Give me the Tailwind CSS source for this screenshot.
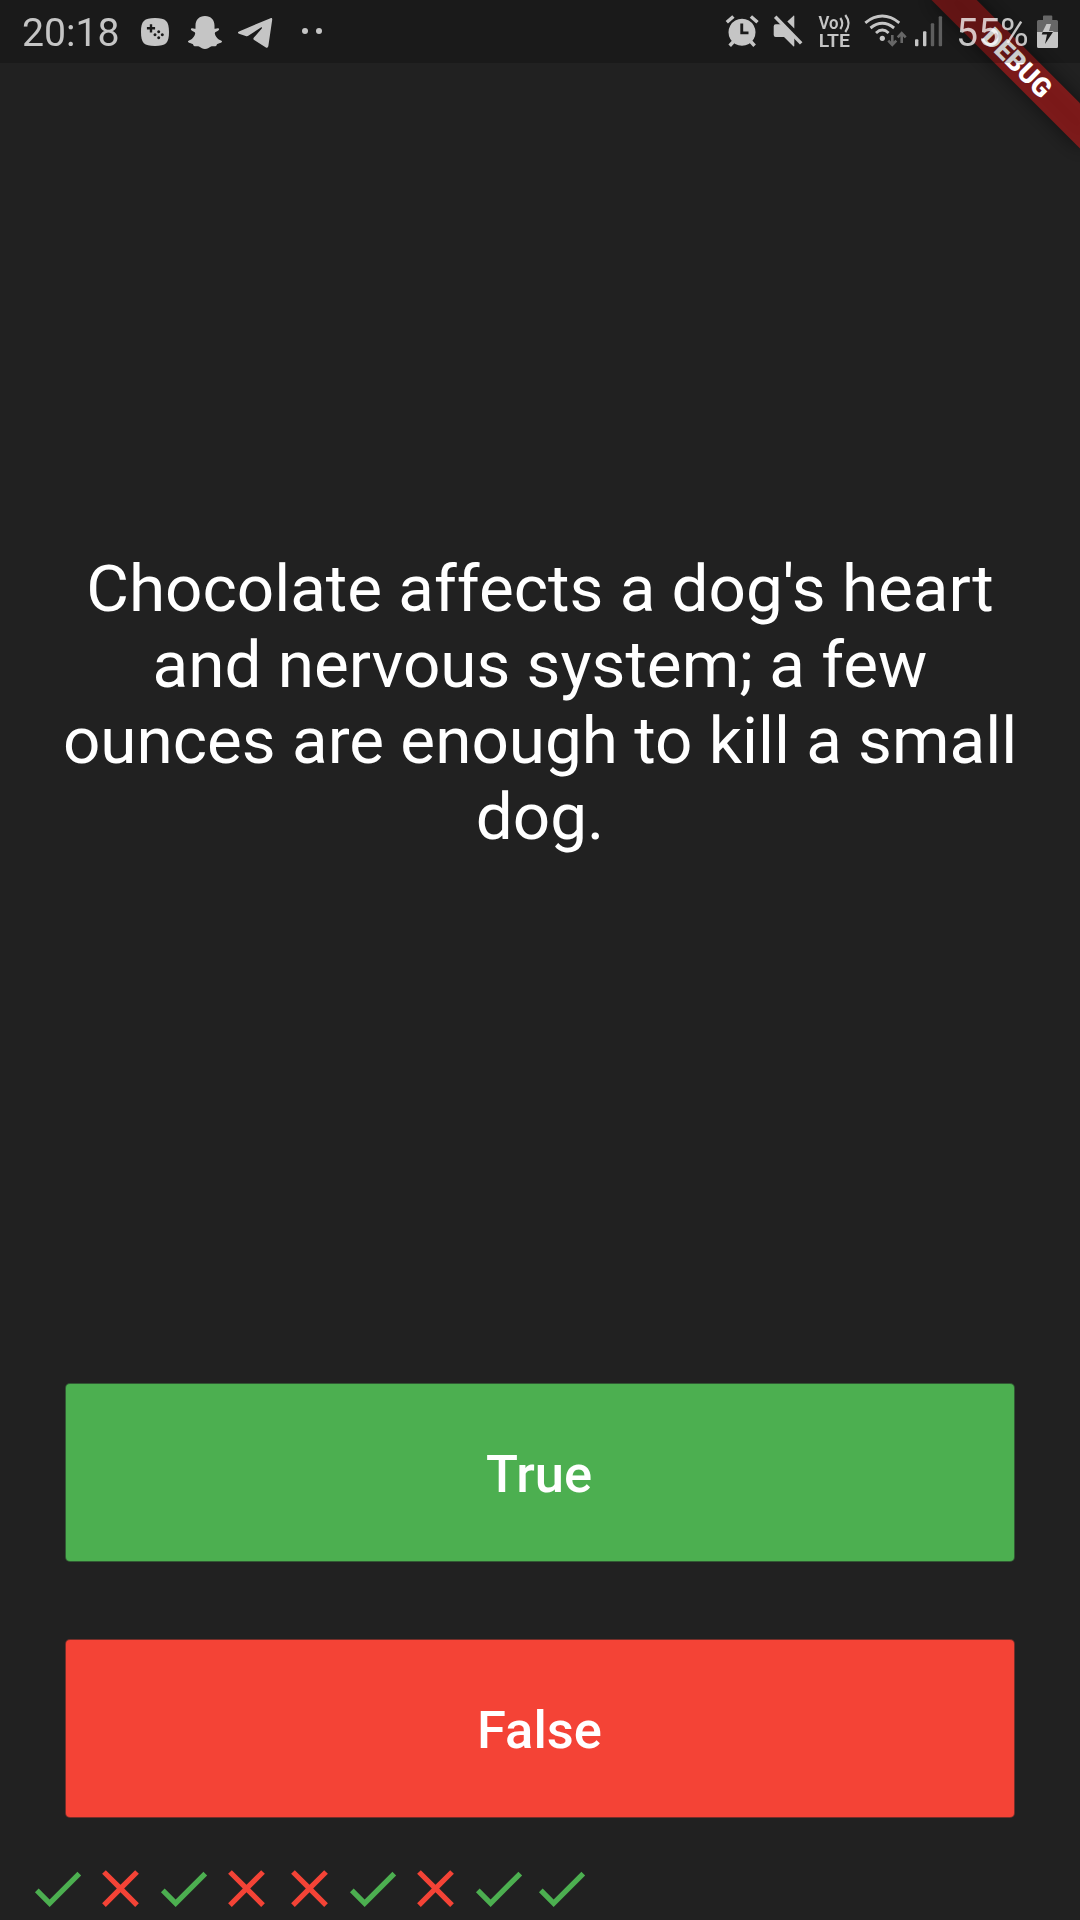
<!DOCTYPE html>
<html lang="en">
<head>
<meta charset="utf-8">
<title>Quizzler</title>
<script src="https://cdn.jsdelivr.net/npm/@tailwindcss/browser@4"></script>
</head>
<body class="bg-[#212121]">
<div class="relative flex h-[1920px] w-[1080px] flex-col overflow-hidden bg-[#212121] font-['Roboto',sans-serif] text-white">

  <!-- Debug ribbon, under the translucent status bar -->
  <div class="absolute top-[73px] left-[975px] h-[31.5px] w-[210px] origin-[105px_-73px] rotate-45">
    <div class="absolute inset-0 bg-black/50 blur-[10px]"></div>
    <div class="relative flex h-full items-center justify-center bg-[#b71c1c]/63 pt-px text-[26.8px] leading-none font-black">DEBUG</div>
  </div>

  <header class="relative h-[63px] shrink-0 bg-black/20">
    <div class="flex h-full items-center justify-between pr-[20px] pl-[22px] opacity-75">
      <div class="flex items-center">
        <span class="w-[118px] pt-[4px] text-[39.2px] leading-[63px]">20:18</span>
        <svg class="h-[63px] w-[46px]" viewBox="140 0 46 63" fill="currentColor">
          <path fill-rule="evenodd" d="M155 18c11 0 14 3 14 14s-3 14-14 14-14-3-14-14 3-14 14-14zM149.8 24.2v2.9h-2.9v2.4h2.9v2.9h2.4v-2.9h2.9v-2.4h-2.9v-2.9zM158.7 30.200a1.500 1.500 0 1 0 .01 0zM155 33.200a1.500 1.500 0 1 0 .01 0zM162.300 33.200a1.500 1.500 0 1 0 .01 0zM158.700 36.300a1.500 1.500 0 1 0 .01 0z"/>
        </svg>
        <svg class="h-[63px] w-[50px]" viewBox="186 0 50 63" fill="currentColor">
          <path d="M205 16c-6 0-9.500 4-9.500 9.500v3.300c-1.500.3-3-.8-4.200-.3-.8.500-.4 1.500.4 2 1.500 1 3.300 1.400 3.500 2.700-.5 3.300-3.300 6.200-6.200 7.300-1.300.5-1.300 1.400-.3 2.100 1.300.9 3 .9 4 1.500.8.500.4 1.600 1.300 2 1.500.6 3.500-.4 5.500.7 1.700 1 3 2.200 5.500 2.200s3.800-1.200 5.500-2.200c2-1.100 4-.1 5.500-.7.9-.4.5-1.500 1.300-2 1-.6 2.700-.6 4-1.500 1-.7 1-1.600-.3-2.100-2.900-1.100-5.700-4-6.200-7.300.2-1.300 2-1.700 3.500-2.700.8-.5 1.200-1.500.4-2-1.200-.5-2.700.6-4.200.3v-3.300c0-5.500-3.500-9.500-9.500-9.500z"/>
        </svg>
        <svg class="h-[63px] w-[64px]" viewBox="236 0 64 63" fill="currentColor">
          <path d="M270.500 18.200c1.200-.4 1.900.2 1.700 1.600l-3.800 26c-.3 1.900-1.300 2.400-2.900 1.400l-11.300-7.100c-1.100-.7-1.100-1.500-.3-2.500l7.900-9.200c.6-.8 0-1.500-.9-.9l-12.200 8c-1 .7-1.900.8-3 .4l-6.700-2.200c-1.400-.5-1.400-1.700 0-2.300z"/>
        </svg>
        <svg class="h-[63px] w-[26px]" viewBox="300 0 26 63" fill="currentColor">
          <circle cx="305" cy="31" r="3"/><circle cx="319" cy="31" r="3"/>
        </svg>
      </div>

      <div class="flex items-center">
        <svg class="h-[63px] w-[46px]" viewBox="724 0 46 63" fill="none" stroke="currentColor">
          <path stroke="none" fill="currentColor" fill-rule="evenodd" d="M742 18.800a13.500 13.500 0 1 0 .01 0zM740.300 23.500h2.900v7.900h5.300v2.900h-8.200z"/>
          <path stroke-width="3.500" d="M726.800 22.300l6.600-5.800M757.500 22.300l-6.600-5.800M729.700 45.700l5-5.500M754.600 45.700l-5-5.500"/>
        </svg>
        <svg class="h-[63px] w-[46px]" viewBox="770 0 46 63" fill="currentColor">
          <path d="M787.300 21.500l6-5.600c.6-.5 1-.4 1 .4v12.200zM773.700 26.300q0-2 2-2h6.500l12.100 12v9.500c0 .8-.4.9-1 .4l-9.300-9.200h-8.300q-2 0-2-2z"/>
          <path fill="none" stroke="currentColor" stroke-width="3.500" d="M775.200 16.800l26 26.600"/>
        </svg>
        <svg class="h-[63px] w-[46px]" viewBox="816 0 46 63" fill="currentColor">
          <text x="818.500" y="29" font-size="17.500" font-weight="600" textLength="20" lengthAdjust="spacingAndGlyphs">Vo</text>
          <text x="818.800" y="46.500" font-size="18.300" font-weight="600" textLength="31" lengthAdjust="spacingAndGlyphs">LTE</text>
          <path fill="none" stroke="currentColor" stroke-width="2.200" d="M840.300 18q4 5.500 0 11M845.300 15q6.500 8.500 0 17"/>
        </svg>
        <svg class="h-[63px] w-[50px]" viewBox="862 0 50 63" fill="none" stroke="currentColor">
          <path stroke-width="2.900" d="M865.300 22.800q17-13.400 34 0M870.500 28q11.800-9.400 23.600 0M876 33q6.300-5.800 12.600 0"/>
          <circle cx="882.300" cy="38.300" r="2.600" fill="currentColor" stroke="none"/>
          <path class="opacity-45" stroke-width="2.600" d="M892.300 35v9.500M888.300 40.700l4 4.200 4-4.200M901.700 43v-9.500M897.700 37.300l4-4.200 4 4.200"/>
        </svg>
        <svg class="h-[63px] w-[44px]" viewBox="912 0 44 63" fill="currentColor">
          <rect x="915" y="39.300" width="3.400" height="6.900" rx="1"/>
          <rect x="923" y="31.300" width="3.400" height="14.900" rx="1"/>
          <g class="opacity-40"><rect x="930.800" y="23.300" width="3.400" height="22.900" rx="1"/><rect x="938.700" y="16.300" width="3.400" height="29.900" rx="1"/></g>
        </svg>
        <span class="w-[79px] pt-[4px] text-[39.2px] leading-[63px]">55%</span>
        <svg class="h-[63px] w-[25px]" viewBox="1035 0 25 63" fill="currentColor">
          <path class="opacity-45" fill-rule="evenodd" d="M1043 20v-3.500q0-1 1-1h7.300q1 0 1 1v3.500h4.200q1.500 0 1.500 1.500v10.500h-21v-10.500q0-1.500 1.500-1.500z"/>
          <path d="M1046.500 24h4.500l-2 7h4.600l-.6 1h-10.500z"/>
          <path fill-rule="evenodd" d="M1037 32h21v14.500q0 1.500-1.500 1.500h-18q-1.500 0-1.500-1.500zM1042.700 32l-1 2.500h5.300l-2 9.500 8-12z"/>
        </svg>
      </div>
    </div>
  </header>

  <main class="flex flex-1 flex-col">
    <section class="flex h-[1280px] items-center justify-center px-[40px]">
      <p class="text-center text-[65.625px] leading-[76px]">Chocolate affects a dog's heart<br>and nervous system; a few<br>ounces are enough to kill a small<br>dog.</p>
    </section>
    <div class="flex flex-col gap-[79px] px-[66px] pt-[41px]">
      <button class="h-[177px] rounded-[4px] bg-[#4caf50] pt-[3px] pr-[2px] text-[52.5px] font-medium ring-1 ring-[#4caf50]/40">True</button>
      <button class="h-[177px] rounded-[4px] bg-[#f44336] pt-[3px] pr-[1px] text-[52.5px] font-medium ring-1 ring-[#f44336]/40">False</button>
    </div>
  </main>

  <footer id="score" class="flex h-[63px] shrink-0 pl-[26.25px]"></footer>
</div>
<script>
  const icons = {
    check: '<svg class="size-[63px] text-[#4caf50]" viewBox="0 0 24 24" fill="currentColor"><path d="M9 16.17L4.83 12l-1.42 1.41L9 19 21 7l-1.41-1.41z"/></svg>',
    close: '<svg class="size-[63px] text-[#f44336]" viewBox="0 0 24 24" fill="currentColor"><path d="M19 6.41L17.59 5 12 10.59 6.41 5 5 6.41 10.59 12 5 17.590 6.41 19 12 13.41 17.590 19 19 17.590 13.41 12z"/></svg>'
  };
  document.getElementById('score').innerHTML =
    ['check', 'close', 'check', 'close', 'close', 'check', 'close', 'check', 'check'].map(n => icons[n]).join('');
</script>
</body>
</html>
